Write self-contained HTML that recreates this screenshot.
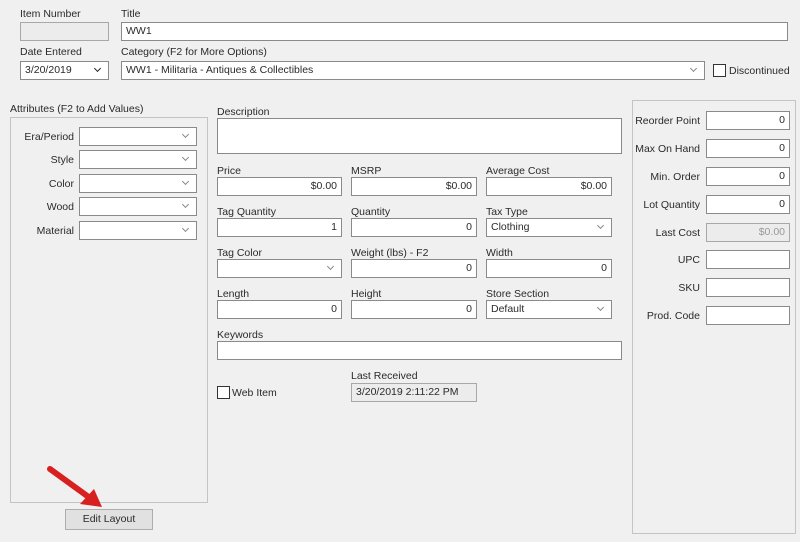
<!DOCTYPE html>
<html><head><meta charset="utf-8"><style>
*{box-sizing:border-box;margin:0;padding:0}
body{width:800px;height:542px;background:#f0f0f0;position:relative;overflow:hidden;font-family:"Liberation Sans",sans-serif;font-size:10.5px;color:#2a2a2a}
.l{position:absolute;white-space:nowrap;line-height:12px}
.r{text-align:right}
.b{position:absolute;background:#fff;border:1px solid #8a8a8a;height:19px;line-height:17px;padding:0 4px;white-space:nowrap}
.n{text-align:right}
.g{background:#ececec;border-color:#a8a8a8}
.c::after{content:"";position:absolute;right:8px;top:4px;width:4px;height:4px;border-right:1px solid #888;border-bottom:1px solid #888;transform:rotate(45deg)}
.cb::after{border-color:#222;border-width:0 1.5px 1.5px 0}
.grp{position:absolute;border:1px solid #c4c4c4}
.chk{position:absolute;width:13px;height:13px;background:#fff;border:1px solid #333}
</style></head><body>
<div class="l" style="left:20px;top:8px">Item Number</div>
<div class="b g" style="left:20px;top:22px;width:89px"></div>
<div class="l" style="left:121px;top:8px">Title</div>
<div class="b" style="left:121px;top:22px;width:667px">WW1</div>
<div class="l" style="left:20px;top:46px">Date Entered</div>
<div class="b c cb" style="left:20px;top:61px;width:89px">3/20/2019</div>
<div class="l" style="left:121px;top:46px">Category (F2 for More Options)</div>
<div class="b c" style="left:121px;top:61px;width:584px">WW1 - Militaria - Antiques &amp; Collectibles</div>
<div class="chk" style="left:713px;top:64px"></div>
<div class="l" style="left:729px;top:65px">Discontinued</div>

<div class="l" style="left:10px;top:103px">Attributes (F2 to Add Values)</div>
<div class="grp" style="left:10px;top:117px;width:198px;height:386px"></div>
<div class="l r" style="left:10px;width:64px;top:131px">Era/Period</div>
<div class="b c" style="left:79px;top:127px;width:118px"></div>
<div class="l r" style="left:10px;width:64px;top:154px">Style</div>
<div class="b c" style="left:79px;top:150px;width:118px"></div>
<div class="l r" style="left:10px;width:64px;top:178px">Color</div>
<div class="b c" style="left:79px;top:174px;width:118px"></div>
<div class="l r" style="left:10px;width:64px;top:201px">Wood</div>
<div class="b c" style="left:79px;top:197px;width:118px"></div>
<div class="l r" style="left:10px;width:64px;top:225px">Material</div>
<div class="b c" style="left:79px;top:221px;width:118px"></div>

<div class="l" style="left:217px;top:106px">Description</div>
<div class="b" style="left:217px;top:118px;width:405px;height:36px"></div>

<div class="l" style="left:217px;top:165px">Price</div>
<div class="b n" style="left:217px;top:177px;width:125px">$0.00</div>
<div class="l" style="left:351px;top:165px">MSRP</div>
<div class="b n" style="left:351px;top:177px;width:126px">$0.00</div>
<div class="l" style="left:486px;top:165px">Average Cost</div>
<div class="b n" style="left:486px;top:177px;width:126px">$0.00</div>

<div class="l" style="left:217px;top:206px">Tag Quantity</div>
<div class="b n" style="left:217px;top:218px;width:125px">1</div>
<div class="l" style="left:351px;top:206px">Quantity</div>
<div class="b n" style="left:351px;top:218px;width:126px">0</div>
<div class="l" style="left:486px;top:206px">Tax Type</div>
<div class="b c" style="left:486px;top:218px;width:126px">Clothing</div>

<div class="l" style="left:217px;top:247px">Tag Color</div>
<div class="b c" style="left:217px;top:259px;width:125px"></div>
<div class="l" style="left:351px;top:247px">Weight (lbs) - F2</div>
<div class="b n" style="left:351px;top:259px;width:126px">0</div>
<div class="l" style="left:486px;top:247px">Width</div>
<div class="b n" style="left:486px;top:259px;width:126px">0</div>

<div class="l" style="left:217px;top:288px">Length</div>
<div class="b n" style="left:217px;top:300px;width:125px">0</div>
<div class="l" style="left:351px;top:288px">Height</div>
<div class="b n" style="left:351px;top:300px;width:126px">0</div>
<div class="l" style="left:486px;top:288px">Store Section</div>
<div class="b c" style="left:486px;top:300px;width:126px">Default</div>

<div class="l" style="left:217px;top:329px">Keywords</div>
<div class="b" style="left:217px;top:341px;width:405px"></div>

<div class="chk" style="left:217px;top:386px"></div>
<div class="l" style="left:232px;top:387px">Web Item</div>
<div class="l" style="left:351px;top:370px">Last Received</div>
<div class="b g" style="left:351px;top:383px;width:126px">3/20/2019 2:11:22 PM</div>

<div class="grp" style="left:632px;top:100px;width:164px;height:434px"></div>
<div class="l r" style="left:632px;width:68px;top:115px">Reorder Point</div>
<div class="b n" style="left:706px;top:111px;width:84px">0</div>
<div class="l r" style="left:632px;width:68px;top:143px">Max On Hand</div>
<div class="b n" style="left:706px;top:139px;width:84px">0</div>
<div class="l r" style="left:632px;width:68px;top:171px">Min. Order</div>
<div class="b n" style="left:706px;top:167px;width:84px">0</div>
<div class="l r" style="left:632px;width:68px;top:199px">Lot Quantity</div>
<div class="b n" style="left:706px;top:195px;width:84px">0</div>
<div class="l r" style="left:632px;width:68px;top:227px">Last Cost</div>
<div class="b n g" style="left:706px;top:223px;width:84px;color:#999">$0.00</div>
<div class="l r" style="left:632px;width:68px;top:254px">UPC</div>
<div class="b" style="left:706px;top:250px;width:84px"></div>
<div class="l r" style="left:632px;width:68px;top:282px">SKU</div>
<div class="b" style="left:706px;top:278px;width:84px"></div>
<div class="l r" style="left:632px;width:68px;top:310px">Prod. Code</div>
<div class="b" style="left:706px;top:306px;width:84px"></div>

<div style="position:absolute;left:65px;top:509px;width:88px;height:21px;background:#e1e1e1;border:1px solid #adadad;text-align:center;line-height:19px">Edit Layout</div>

<svg style="position:absolute;left:0;top:0" width="800" height="542">
<line x1="50" y1="469" x2="90" y2="498" stroke="#d82020" stroke-width="6" stroke-linecap="round"/>
<polygon points="102,507 80,504 94,489" fill="#d82020"/>
</svg>
</body></html>
